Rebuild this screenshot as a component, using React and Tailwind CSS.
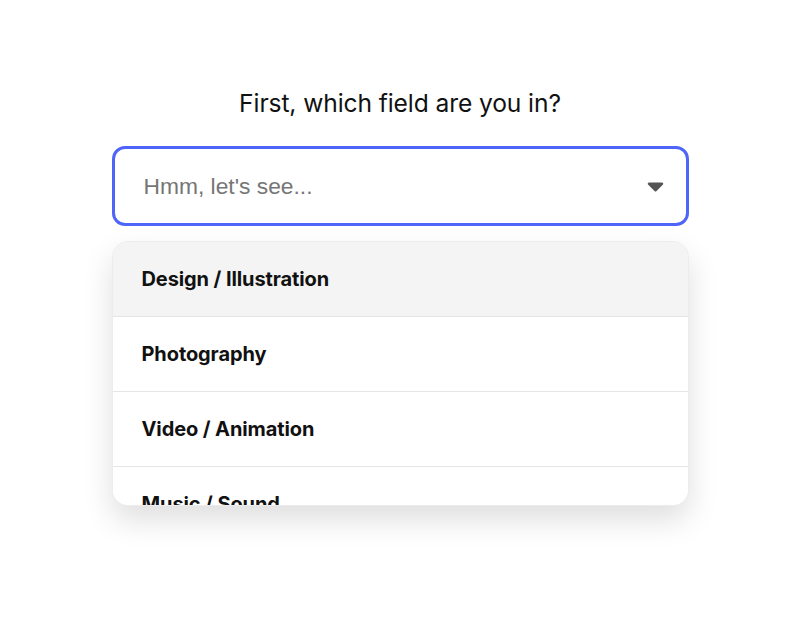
import React from "react";

const FIELDS = [
  "Design / Illustration",
  "Photography",
  "Video / Animation",
  "Music / Sound",
  "Writing",
];

function Caret() {
  return (
    <svg width="17" height="11" viewBox="0 0 17 11" className="shrink-0">
      <path
        d="M2 1.5h13a1.3 1.3 0 0 1 1 2.1l-6.5 6.3a1.4 1.4 0 0 1-2 0L1 3.6a1.3 1.3 0 0 1 1-2.1z"
        fill="#555555"
      />
    </svg>
  );
}

export default function App() {
  return (
    <div
      className="flex min-h-[629px] w-full flex-col items-center bg-white pt-[87px]"
      style={{ fontFamily: "Inter, 'Noto Sans', sans-serif" }}
    >
      <h1 className="text-[24.6px] leading-[32px] font-normal tracking-[-0.1px] text-[#111]">
        First, which field are you in?
      </h1>

      <div className="mt-[27px] flex h-[80px] w-[577px] items-center justify-between rounded-[13px] border-[3px] border-[#4f64f8] pl-[29px] pr-[22px]">
        <span
          className="text-[22.8px] text-[#767676]"
          style={{ fontFamily: "'Liberation Sans', Arial, sans-serif" }}
        >
          Hmm, let's see...
        </span>
        <Caret />
      </div>

      <div className="mt-[15px] h-[265px] w-[577px] overflow-hidden rounded-[16px] border border-[#ececec] bg-white shadow-[0_14px_30px_rgba(0,0,0,0.13)]">
        {FIELDS.map((label, i) => (
          <div
            key={label}
            className={`flex h-[75px] items-center border-b border-[#e6e6e6] pl-[29px] text-[20px] font-bold tracking-[-0.1px] text-[#111] ${
              i === 0 ? "bg-[#f4f4f4]" : "bg-white"
            }`}
          >
            {label}
          </div>
        ))}
      </div>
    </div>
  );
}
